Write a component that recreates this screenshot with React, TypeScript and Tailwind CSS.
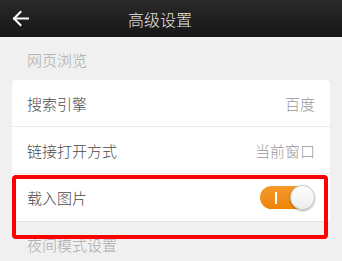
import React from "react";

const font = { fontFamily: '"Noto Sans CJK SC", "Noto Sans", sans-serif' };

function Row({ label, value, children, last }: { label: string; value?: string; children?: React.ReactNode; last?: boolean }) {
  return (
    <div className={`flex h-[47px] items-center justify-between pl-[15px] pr-[15px] ${last ? "" : "border-b border-[#ececec]"}`}>
      <span className="text-[15px] font-light leading-none text-[#4a4a4a]">{label}</span>
      {value && <span className="text-[15px] font-light leading-none text-[#999999]">{value}</span>}
      {children}
    </div>
  );
}

function Toggle() {
  return (
    <div className="relative h-[25px] w-[55px]">
      <div className="absolute left-0 top-[1px] flex h-[23px] w-[50px] items-center rounded-full bg-gradient-to-b from-[#f39a2a] to-[#ee8400] pl-[15px]">
        <div className="h-[12px] w-[2px] bg-white" />
      </div>
      <div className="absolute right-0 top-0 h-[25px] w-[25px] rounded-full border border-[#c8c8c8] bg-gradient-to-b from-white to-[#ececec] shadow-[0_1px_2px_rgba(0,0,0,0.35)]" />
    </div>
  );
}

export default function App() {
  return (
    <div className="relative h-[261px] w-[342px] overflow-hidden bg-[#f0f0f0]" style={font}>
      <header className="flex h-[37px] items-center bg-gradient-to-b from-[#2a2a2a] to-[#161616]">
        <div className="flex w-[40px] items-center pl-[12px]">
          <svg width="17" height="17" viewBox="0 0 17 17" fill="none" stroke="white" strokeWidth="2" strokeLinecap="square">
            <path d="M2 8.5H16" />
            <path d="M8.5 2L2 8.5L8.5 15" />
          </svg>
        </div>
        <h1 className="flex-1 pr-[62px] text-center text-[16px] font-light leading-none text-[#e6e6e6]">高级设置</h1>
      </header>

      <div className="flex h-[43px] items-center pl-[27px] pt-[2px] text-[15px] font-light leading-none text-[#aaaaaa]">网页浏览</div>

      <div className="mx-[12px] overflow-hidden rounded-t-[4px] bg-white">
        <Row label="搜索引擎" value="百度" />
        <Row label="链接打开方式" value="当前窗口" />
        <div className="border-b border-[#e4e4e4]">
          <Row label="载入图片" last>
            <Toggle />
          </Row>
        </div>
      </div>

      <div className="flex h-[43px] items-center pl-[27px] pt-[2px] text-[15px] font-light leading-none text-[#aaaaaa]">夜间模式设置</div>

      <div className="pointer-events-none absolute left-[12px] top-[175px] h-[64px] w-[316px] rounded-[4px] border-4 border-[#ff0000]" />
    </div>
  );
}
